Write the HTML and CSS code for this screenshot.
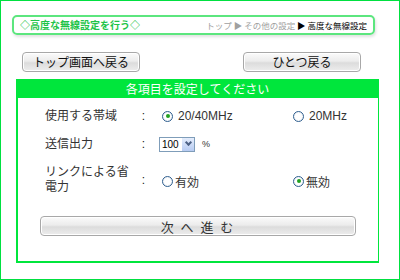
FILE: index.html
```html
<!DOCTYPE html>
<html lang="ja">
<head>
    <meta charset="UTF-8">
    <title>高度な無線設定</title>
    <link rel="stylesheet" href="styles.css">
</head>
<body>
    <div class="frame">
        <div class="title-bar">
            <span class="page-title">◇高度な無線設定を行う◇</span>
            <span class="crumbs">トップ <i>▶</i> その他の設定 <i class="now">▶</i> <b>高度な無線設定</b></span>
        </div>

        <div class="nav-buttons">
            <button class="btn btn-top">トップ画面へ戻る</button>
            <button class="btn btn-back">ひとつ戻る</button>
        </div>

        <div class="panel">
            <div class="panel-head">各項目を設定してください</div>
            <div class="panel-body">
                <div class="row">
                    <div class="label">使用する帯域</div>
                    <div class="colon">:</div>
                    <div class="opt"><span class="radio on"></span>20/40MHz</div>
                    <div class="opt"><span class="radio"></span>20MHz</div>
                </div>
                <div class="row">
                    <div class="label">送信出力</div>
                    <div class="colon">:</div>
                    <div class="opt power">
                        <span class="select">100<span class="arrow"></span></span>
                        <span class="unit">%</span>
                    </div>
                </div>
                <div class="row row-tall">
                    <div class="label">リンクによる省<br>電力</div>
                    <div class="colon">:</div>
                    <div class="opt"><span class="radio"></span>有効</div>
                    <div class="opt"><span class="radio on"></span>無効</div>
                </div>
                <div class="submit-wrap">
                    <button class="btn btn-next">次 へ 進 む</button>
                </div>
            </div>
        </div>
    </div>
</body>
</html>
```

FILE: styles.css
```css
/* Reset */
* {
    margin: 0;
    padding: 0;
    box-sizing: border-box;
}

body {
    font-family: "Liberation Sans", "Noto Sans CJK JP", sans-serif;
    background-color: #ffffff;
    color: #222222;
    width: 400px;
    height: 280px;
}

/* Outer green frame */
.frame {
    width: 400px;
    height: 280px;
    border: 1px solid #00e040;
    padding: 14px 24px 0 11px;
}

/* Title bar */
.title-bar {
    height: 20px;
    border: 2px solid #5ce67e;
    border-radius: 5px;
    box-shadow: 1px 2px 3px rgba(0, 0, 0, 0.12);
    display: flex;
    align-items: center;
    justify-content: space-between;
    padding: 0 6px 0 6px;
}

.page-title {
    font-family: "Noto Sans CJK JP", sans-serif;
    font-size: 10px;
    font-weight: bold;
    color: #1fc449;
    line-height: 1;
}

.crumbs {
    font-family: "Noto Sans CJK JP", sans-serif;
    font-size: 8.5px;
    color: #a0a0a0;
    line-height: 1;
}

.crumbs i {
    font-style: normal;
    color: #a0a0a0;
}

.crumbs i.now {
    color: #000000;
}

.crumbs b {
    font-weight: normal;
    color: #000000;
}

/* Buttons */
.nav-buttons {
    display: flex;
    justify-content: space-between;
    padding: 0 14px 0 10px;
    margin-top: 17px;
}

.btn {
    font-family: "Noto Sans CJK JP", sans-serif;
    font-size: 12px;
    color: #111111;
    height: 20px;
    border: 1px solid #a8a8a8;
    border-radius: 4px;
    background: linear-gradient(#fbfbfb, #ececec 45%, #dcdcdc 55%, #ededed);
    box-shadow: inset 0 0 0 1px #ffffff;
    line-height: 1;
}

.btn-top,
.btn-back {
    width: 118px;
}

/* Settings panel */
.panel {
    margin: 7px 0 0 4px;
    width: 363px;
}

.panel-head {
    font-family: "Noto Sans CJK JP", sans-serif;
    background-color: #00e63c;
    color: #ffffff;
    font-size: 12px;
    height: 19px;
    line-height: 19px;
    text-align: center;
}

.panel-body {
    border: 1px solid #00e63c;
    border-top: none;
    border-left-width: 2px;
    border-bottom-width: 2px;
    height: 165px;
    padding: 4px 0 0 27px;
}

.row {
    display: flex;
    align-items: center;
    height: 28px;
    font-size: 12px;
}

.row > div {
    flex-shrink: 0;
}

.row-tall {
    height: 40px;
    margin-top: 2px;
}

.label {
    width: 89px;
    line-height: 15px;
    color: #333333;
}

.colon {
    width: 19px;
    text-align: center;
}

.opt {
    display: flex;
    align-items: center;
    width: 131px;
    padding-left: 9px;
    color: #333333;
}

.row-tall .opt {
    margin-top: 2px;
}

.row-tall .opt:first-of-type {
    padding-left: 7px;
    width: 130px;
}

.radio {
    width: 11px;
    height: 11px;
    border: 1px solid #2f5f8f;
    border-radius: 50%;
    background: radial-gradient(circle, #ffffff 45%, #dde3ea);
    margin-right: 5px;
    display: inline-flex;
    align-items: center;
    justify-content: center;
}

.row-tall .radio {
    margin-right: 2px;
}

.radio.on::after {
    content: "";
    width: 4px;
    height: 4px;
    border-radius: 50%;
    background-color: #21a121;
}

/* Fake select box */
.select {
    display: inline-flex;
    align-items: center;
    justify-content: space-between;
    width: 36px;
    height: 15px;
    border: 1px solid #7f9db9;
    font-size: 10px;
    padding-left: 2px;
    color: #000000;
    margin-left: -3px;
}

.arrow {
    width: 13px;
    height: 13px;
    background: linear-gradient(#e4edfc, #b7cbf2);
    border-left: 1px solid #ffffff;
    position: relative;
}

.arrow::after {
    content: "";
    position: absolute;
    left: 4px;
    top: 2px;
    width: 3px;
    height: 3px;
    border-right: 2px solid #4d6185;
    border-bottom: 2px solid #4d6185;
    transform: rotate(45deg);
}

.unit {
    font-size: 9px;
    margin-left: 7px;
}

.submit-wrap {
    margin-top: 16px;
}

.btn-next {
    width: 316px;
    margin-left: -5px;
    font-size: 13px;
    letter-spacing: 2px;
    color: #333333;
}
```
